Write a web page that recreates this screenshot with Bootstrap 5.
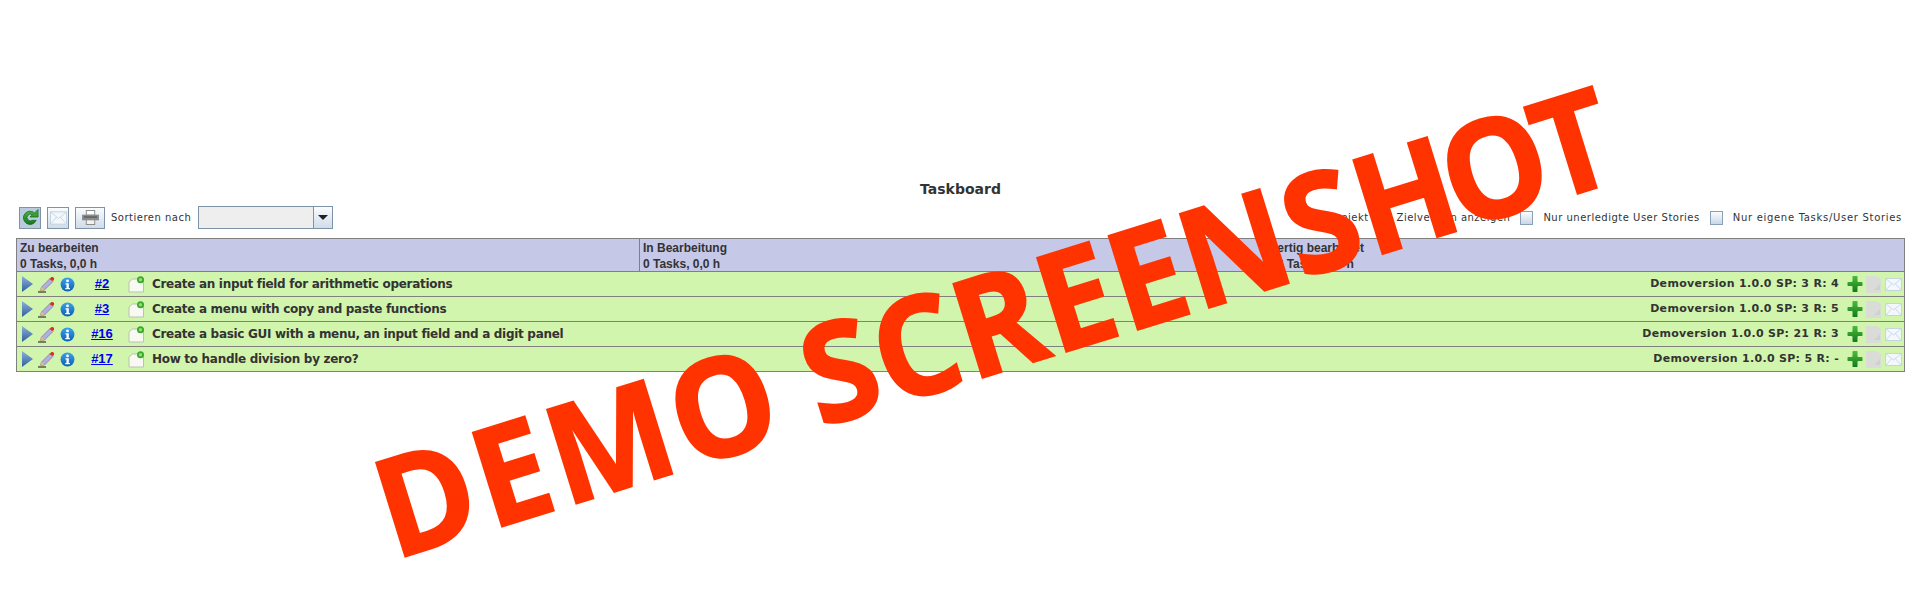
<!DOCTYPE html>
<html lang="de">
<head>
    <meta charset="UTF-8">
    <meta name="viewport" content="width=device-width, initial-scale=1.0">
    <title>Taskboard</title>
    <link href="https://cdn.jsdelivr.net/npm/bootstrap@5.3.0/dist/css/bootstrap.min.css" rel="stylesheet">
    <style>
        body {
            background-color: #fff;
            color: #333;
            font-family: "DejaVu Sans", sans-serif;
            font-size: 11px;
            height: 607px;
            overflow: hidden;
        }
        .board-page {
            padding: 181px 15px 0 16px;
        }
        .board-title {
            font-family: "DejaVu Sans", sans-serif;
            font-size: 14px;
            font-weight: 700;
            line-height: 16px;
            text-align: center;
            margin: 0 0 9px;
            color: #333;
        }
        .board-tools {
            height: 23px;
            margin-bottom: 9px;
            padding: 0 0 0 3px;
            font-size: 10px;
            letter-spacing: .5px;
        }
        .tool-btn {
            width: 22px;
            height: 22px;
            padding: 0;
            margin-right: 6px;
            border: 1px solid #7f93a8;
            border-radius: 0;
            background: linear-gradient(#fafcfe, #cfdcea);
            display: flex;
            align-items: center;
            justify-content: center;
        }
        .tool-btn-active {
            background: #b9cbdc;
        }
        .tool-btn-wide {
            width: 30px;
        }
        .sort-label {
            margin: 0 7px 0 0;
        }
        .sort-box {
            width: 135px;
            height: 23px;
            border: 1px solid #7f93a8;
        }
        .sort-value {
            flex: 1;
            background: #eee;
        }
        .sort-arrow {
            width: 19px;
            border-left: 1px solid #7f93a8;
            background: linear-gradient(#fafcfe, #cfdcea);
        }
        .sort-caret {
            width: 0;
            height: 0;
            border-left: 5px solid transparent;
            border-right: 5px solid transparent;
            border-top: 5px solid #222;
        }
        .tool-check {
            width: 13px;
            height: 14px;
            border: 1px solid #8aa0b6;
            background: linear-gradient(#fafcfe, #c9d8e8);
        }
        .filter-group {
            gap: 10px;
            padding-right: 3px;
        }
        .filter-wide {
            letter-spacing: .7px;
        }
        .board-table {
            border: 1px solid #808080;
            border-bottom: 0;
        }
        .board-head {
            height: 32px;
            background: #c6c8e8;
            font-family: "Liberation Sans", sans-serif;
            font-size: 12px;
            font-weight: 700;
            line-height: 16px;
        }
        .head-col {
            padding: 1px 0 0 3px;
            white-space: nowrap;
        }
        .head-col + .head-col {
            border-left: 1px solid #808080;
        }
        .head-todo { width: 622px; }
        .head-doing { width: 627px; }
        .head-done { flex: 1; }
        .task-row {
            height: 25px;
            background: #d2f5ae;
            border-top: 1px solid #808080;
            font-weight: 700;
        }
        .task-row:last-child {
            height: 26px;
            border-bottom: 1px solid #808080;
        }
        .task-icons {
            padding-left: 5px;
            width: 62px;
            gap: 5px;
        }
        .task-id {
            width: 42px;
            margin-left: 2px;
            text-align: center;
            font-family: "Liberation Sans", sans-serif;
            font-size: 13px;
            color: #00e;
        }
        .task-note {
            margin: 0 7px 0 5px;
        }
        .task-title {
            font-size: 12px;
            letter-spacing: -.3px;
        }
        .task-meta {
            padding-right: 2px;
        }
        .task-meta-text {
            margin-right: 8px;
            letter-spacing: .3px;
        }
        .task-actions {
            gap: 3px;
        }
        .demo-mark {
            position: absolute;
            left: 0;
            top: 0;
            pointer-events: none;
        }
        .demo-mark text {
            font-family: "Open Sans", sans-serif;
            font-weight: 700;
            font-size: 135px;
            fill: #ff3300;
            stroke: #ff3300;
            stroke-width: 2px;
            word-spacing: -8px;
        }
        .demo-first {
            letter-spacing: 4px;
        }
        .demo-middle {
            letter-spacing: 1px;
        }
        .demo-last {
            letter-spacing: -9px;
        }
    </style>
</head>
<body>
    <svg width="0" height="0" class="position-absolute">
        <defs>
            <linearGradient id="gradBlue" x1="0" y1="0" x2="0" y2="1"><stop offset="0" stop-color="#8db0dc"/><stop offset="1" stop-color="#2f5f9e"/></linearGradient>
            <linearGradient id="gradInfo" x1="0" y1="0" x2="0" y2="1"><stop offset="0" stop-color="#3ea0ea"/><stop offset="1" stop-color="#0b5fb8"/></linearGradient>
            <linearGradient id="gradGreen" x1="0" y1="0" x2="0" y2="1"><stop offset="0" stop-color="#4cbc3c"/><stop offset="1" stop-color="#137a1c"/></linearGradient>
            <symbol id="icoPlay" viewBox="0 0 11 16"><path d="M0 0 L11 8 L0 16 Z" fill="url(#gradBlue)"/></symbol>
            <symbol id="icoPencil" viewBox="0 0 17 17">
                <path d="M0 16 H8" stroke="#111" stroke-width="1"/>
                <path d="M2 15 L3.5 11 L12 2.5 L15 5.5 L6.5 14 Z" fill="#b3aee0" stroke="#6b6598" stroke-width=".6"/>
                <path d="M2 15 L3.5 11 L6.5 14 Z" fill="#e8c060"/>
                <path d="M11.5 3 L13.5 1 Q15 .5 16 2 Q16.5 3 15.5 4.5 L14.5 5 Z" fill="#d8301c"/>
            </symbol>
            <symbol id="icoInfo" viewBox="0 0 16 16">
                <circle cx="8" cy="8" r="7.4" fill="url(#gradInfo)"/>
                <circle cx="8" cy="4.2" r="1.5" fill="#fff"/>
                <path d="M5.8 6.6 H9.4 V11.6 H10.6 V13 H5.6 V11.6 H6.9 V8 H5.8 Z" fill="#fff"/>
            </symbol>
            <symbol id="icoNote" viewBox="0 0 17 17">
                <path d="M1 6 L4.5 3 H15.5 V16 H1 Z" fill="#f7f9f2" stroke="#b8c4ae" stroke-width="1"/>
                <circle cx="12.5" cy="3.7" r="3.5" fill="#3aa82e"/>
                <circle cx="12.5" cy="3.7" r="1.7" fill="#8fe070"/>
            </symbol>
            <symbol id="icoPlus" viewBox="0 0 16 18">
                <path d="M6 1 H10 Q10.5 1 10.5 2 V6 Q10.5 7 11.5 7 H15 Q15.5 7 15.5 8 V10 Q15.5 11 15 11 H11.5 Q10.5 11 10.5 12 V16 Q10.5 17 10 17 H6 Q5.5 17 5.5 16 V12 Q5.5 11 4.5 11 H1 Q.5 11 .5 10 V8 Q.5 7 1 7 H4.5 Q5.5 7 5.5 6 V2 Q5.5 1 6 1 Z" fill="url(#gradGreen)"/>
            </symbol>
            <symbol id="icoCopy" viewBox="0 0 16 17">
                <path d="M0 0 H11 L15 3 V17 H0 Z" fill="#dadcd8"/>
                <path d="M8 14 L14 8 V14 Z" fill="#cfd1cd"/>
            </symbol>
            <symbol id="icoMail" viewBox="0 0 18 14">
                <rect x=".5" y=".5" width="17" height="13" fill="#f4f8fc" stroke="#c3d1de"/>
                <path d="M1 1 L9 7.5 L17 1 M1 13 L7 6 M17 13 L11 6" fill="none" stroke="#c6d6e6"/>
            </symbol>
            <symbol id="icoRefresh" viewBox="0 0 18 18">
                <path d="M14 5 A7 7 0 1 0 15 12 H11 A3.6 3.6 0 1 1 11 6 L8.5 8.5 H17 V0.5 L14 3.5 Z" fill="url(#gradGreen)" stroke="#0b5c14" stroke-width=".7"/>
            </symbol>
            <symbol id="icoPrint" viewBox="0 0 18 16">
                <rect x="4.5" y=".5" width="9" height="5" fill="#fff" stroke="#888"/>
                <rect x="0" y="5" width="18" height="6" fill="#8a8a8a"/>
                <rect x="2" y="7" width="14" height="1" fill="#444"/>
                <rect x="4.5" y="10.5" width="9" height="5" fill="#f2f2f2" stroke="#888"/>
            </symbol>
        </defs>
    </svg>

    <div class="board-page">
        <h1 class="board-title">Taskboard</h1>

        <div class="board-tools d-flex justify-content-between align-items-center">
            <div class="d-flex align-items-center">
                <button type="button" class="btn tool-btn tool-btn-active"><svg width="17" height="17"><use href="#icoRefresh"/></svg></button>
                <button type="button" class="btn tool-btn"><svg width="17" height="14"><use href="#icoMail"/></svg></button>
                <button type="button" class="btn tool-btn tool-btn-wide"><svg width="17" height="15"><use href="#icoPrint"/></svg></button>
                <span class="sort-label">Sortieren nach</span>
                <div class="sort-box d-flex">
                    <div class="sort-value"></div>
                    <div class="sort-arrow d-flex align-items-center justify-content-center"><span class="sort-caret"></span></div>
                </div>
            </div>
            <div class="filter-group d-flex align-items-center">
                <span class="tool-check"></span><span>Projekt und Zielversion anzeigen</span>
                <span class="tool-check"></span><span>Nur unerledigte User Stories</span>
                <span class="tool-check"></span><span class="filter-wide">Nur eigene Tasks/User Stories</span>
            </div>
        </div>

        <div class="board-table">
            <div class="board-head d-flex">
                <div class="head-col head-todo">Zu bearbeiten<br>0 Tasks, 0,0 h</div>
                <div class="head-col head-doing">In Bearbeitung<br>0 Tasks, 0,0 h</div>
                <div class="head-col head-done">Fertig bearbeitet<br>13 Tasks, 0,0 h</div>
            </div>

            <div class="task-row d-flex align-items-center">
                <div class="task-icons d-flex align-items-center"><svg width="11" height="16"><use href="#icoPlay"/></svg><svg width="17" height="17"><use href="#icoPencil"/></svg><svg width="15" height="15"><use href="#icoInfo"/></svg></div>
                <a class="task-id" href="#">#2</a>
                <svg class="task-note" width="17" height="17"><use href="#icoNote"/></svg>
                <span class="task-title flex-grow-1">Create an input field for arithmetic operations</span>
                <div class="task-meta d-flex align-items-center">
                    <span class="task-meta-text">Demoversion 1.0.0 SP: 3 R: 4</span>
                    <div class="task-actions d-flex align-items-center"><svg width="16" height="18"><use href="#icoPlus"/></svg><svg width="16" height="17"><use href="#icoCopy"/></svg><svg width="17" height="13"><use href="#icoMail"/></svg></div>
                </div>
            </div>
            <div class="task-row d-flex align-items-center">
                <div class="task-icons d-flex align-items-center"><svg width="11" height="16"><use href="#icoPlay"/></svg><svg width="17" height="17"><use href="#icoPencil"/></svg><svg width="15" height="15"><use href="#icoInfo"/></svg></div>
                <a class="task-id" href="#">#3</a>
                <svg class="task-note" width="17" height="17"><use href="#icoNote"/></svg>
                <span class="task-title flex-grow-1">Create a menu with copy and paste functions</span>
                <div class="task-meta d-flex align-items-center">
                    <span class="task-meta-text">Demoversion 1.0.0 SP: 3 R: 5</span>
                    <div class="task-actions d-flex align-items-center"><svg width="16" height="18"><use href="#icoPlus"/></svg><svg width="16" height="17"><use href="#icoCopy"/></svg><svg width="17" height="13"><use href="#icoMail"/></svg></div>
                </div>
            </div>
            <div class="task-row d-flex align-items-center">
                <div class="task-icons d-flex align-items-center"><svg width="11" height="16"><use href="#icoPlay"/></svg><svg width="17" height="17"><use href="#icoPencil"/></svg><svg width="15" height="15"><use href="#icoInfo"/></svg></div>
                <a class="task-id" href="#">#16</a>
                <svg class="task-note" width="17" height="17"><use href="#icoNote"/></svg>
                <span class="task-title flex-grow-1">Create a basic GUI with a menu, an input field and a digit panel</span>
                <div class="task-meta d-flex align-items-center">
                    <span class="task-meta-text">Demoversion 1.0.0 SP: 21 R: 3</span>
                    <div class="task-actions d-flex align-items-center"><svg width="16" height="18"><use href="#icoPlus"/></svg><svg width="16" height="17"><use href="#icoCopy"/></svg><svg width="17" height="13"><use href="#icoMail"/></svg></div>
                </div>
            </div>
            <div class="task-row d-flex align-items-center">
                <div class="task-icons d-flex align-items-center"><svg width="11" height="16"><use href="#icoPlay"/></svg><svg width="17" height="17"><use href="#icoPencil"/></svg><svg width="15" height="15"><use href="#icoInfo"/></svg></div>
                <a class="task-id" href="#">#17</a>
                <svg class="task-note" width="17" height="17"><use href="#icoNote"/></svg>
                <span class="task-title flex-grow-1">How to handle division by zero?</span>
                <div class="task-meta d-flex align-items-center">
                    <span class="task-meta-text">Demoversion 1.0.0 SP: 5 R: -</span>
                    <div class="task-actions d-flex align-items-center"><svg width="16" height="18"><use href="#icoPlus"/></svg><svg width="16" height="17"><use href="#icoCopy"/></svg><svg width="17" height="13"><use href="#icoMail"/></svg></div>
                </div>
            </div>
        </div>
    </div>

    <!-- Wasserzeichen liegt ueber allem -->
    <svg class="demo-mark" width="1920" height="607">
        <text transform="translate(394 560) rotate(-17.2) scale(.975 1.02)"><tspan class="demo-first">DEMO </tspan><tspan class="demo-middle">SCREENS</tspan><tspan class="demo-last">HOT</tspan></text>
    </svg>

    <script src="https://cdn.jsdelivr.net/npm/bootstrap@5.3.0/dist/js/bootstrap.bundle.min.js"></script>
</body>
</html>
